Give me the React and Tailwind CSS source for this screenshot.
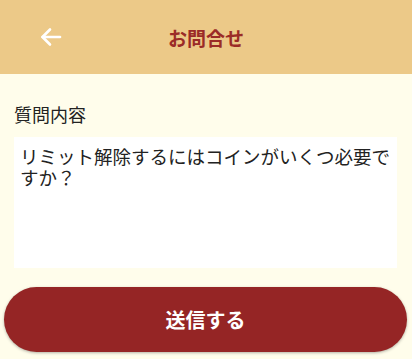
import React, { useState } from 'react';

const font = { fontFamily: '"Noto Sans CJK JP", "Noto Sans", sans-serif' };

const App = () => {
  const [text, setText] = useState('リミット解除するにはコインがいくつ必要ですか？');

  return (
    <div className="w-[412px] h-[359px] bg-[#fffdeb] overflow-hidden" style={font}>
      {/* Header */}
      <header className="h-[74px] bg-[#ecc988] grid grid-cols-[1fr_auto_1fr] items-center">
        <button className="justify-self-start ml-[38px] w-[26px] h-[26px] flex items-center justify-center text-white">
          <svg width="24" height="24" viewBox="0 0 24 24" fill="none" stroke="currentColor" strokeWidth="2.6" strokeLinecap="round" strokeLinejoin="round">
            <path d="M21 12H3.5" />
            <path d="M11 4.5L3.5 12L11 19.5" />
          </svg>
        </button>
        <h1 className="text-[19px] font-bold text-[#9b2b27] leading-none">お問合せ</h1>
        <div />
      </header>

      {/* Form */}
      <main className="px-[14px] pt-[27px]">
        <label className="block text-[18px] leading-[27px] text-[#222]">質問内容</label>
        <textarea
          value={text}
          onChange={(e) => setText(e.target.value)}
          className="mt-[9px] block w-[383px] h-[131px] bg-white resize-none outline-none border-0 pl-[6px] pr-[2px] pt-[9px] text-[18.5px] leading-[21px] text-[#222]"
          style={font}
        />
      </main>

      <div className="pl-[4px] pr-[5px] mt-[19px]">
        <button className="w-full h-[65px] rounded-full bg-[#952525] shadow-[0_1px_3px_rgba(0,0,0,0.3)] text-white text-[20px] font-bold">
          送信する
        </button>
      </div>
    </div>
  );
};

export default App;
